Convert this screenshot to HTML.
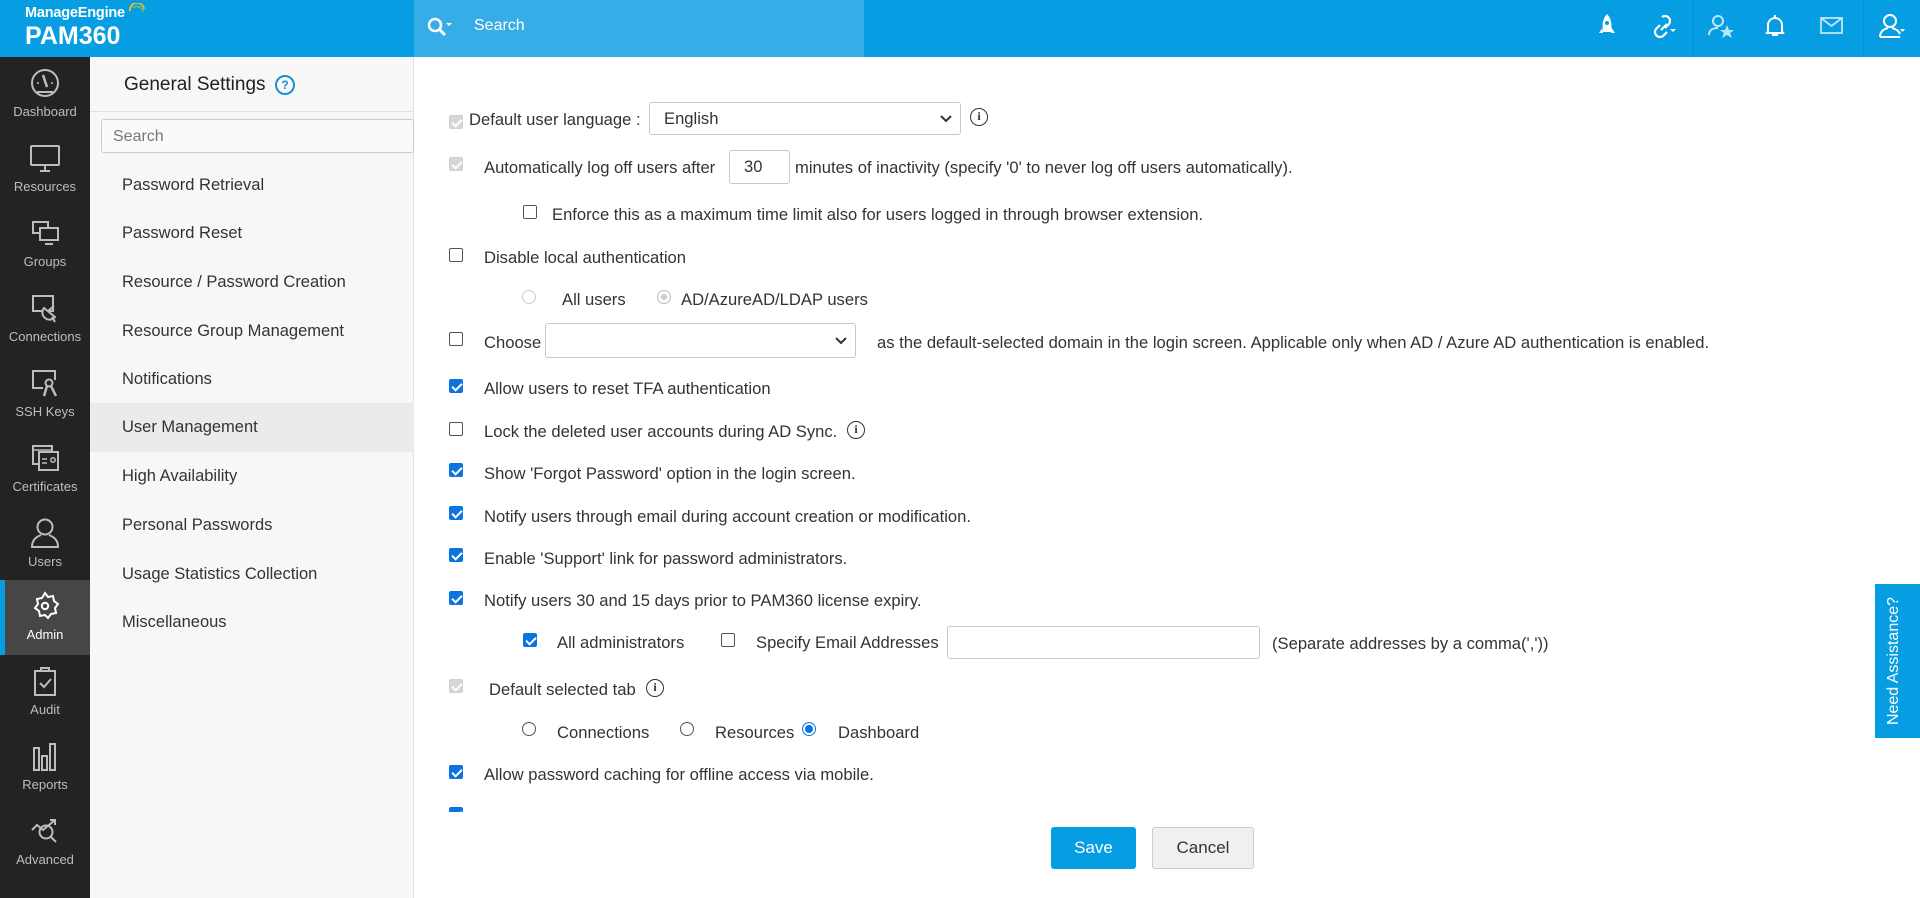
<!DOCTYPE html>
<html><head><meta charset="utf-8"><style>
*{box-sizing:border-box;margin:0;padding:0}
body{width:1920px;height:898px;overflow:hidden;font-family:"Liberation Sans",sans-serif;background:#fff;position:relative;color:#333}
.a{position:absolute}
#hdr{left:0;top:0;width:1920px;height:57px;background:#069de3}
#srch{left:414px;top:0;width:450px;height:57px;background:#36ade6;color:#fff;font-size:16px}
#side{left:0;top:57px;width:90px;height:841px;background:#232323}
.si{position:absolute;left:0;width:90px;height:75px;text-align:center;color:#bdbdbd;font-size:13px}
.si svg{position:absolute;left:29px;top:10px}
.si span{position:absolute;left:0;right:0;top:47px}
#panel{left:90px;top:57px;width:324px;height:841px;background:#f7f7f7;border-right:1px solid #e2e2e2}
.mi{position:absolute;left:0;width:324px;height:49px;line-height:49px;padding-left:32px;font-size:16.5px;color:#333}
.cb{position:absolute;width:14px;height:14px;border:1px solid #555;border-radius:2px;background:#fff}
.cb.on{background:#0a74e0;border-color:#0a74e0}
.cb.on::after,.cb.dis::after{content:"";position:absolute;left:4px;top:1px;width:4px;height:8px;border-style:solid;border-color:#fff;border-width:0 2px 2px 0;transform:rotate(45deg)}
.cb.dis{background:#d6d6d6;border-color:#d0d0d0}
.rd{position:absolute;width:14px;height:14px;border:1px solid #555;border-radius:50%;background:#fff}
.rd.dis{border-color:#ccc}
.rd.dis2{border-color:#bbb}
.rd.dis2::after{content:"";position:absolute;left:3px;top:3px;width:6px;height:6px;border-radius:50%;background:#ccc}
.rd.on{border-color:#0a74e0}
.rd.on::after{content:"";position:absolute;left:2px;top:2px;width:8px;height:8px;border-radius:50%;background:#0a74e0}
.t{position:absolute;font-size:16.6px;color:#333;white-space:nowrap;line-height:20px;margin-top:2px}
.inp{position:absolute;border:1px solid #c8c8c8;border-radius:3px;background:#fff;font-size:16.6px;color:#333;padding-left:14px}
.info{position:absolute;width:18px;height:18px;border:1.5px solid #333;border-radius:50%;font:bold 12px "Liberation Serif",serif;text-align:center;line-height:15px;color:#333}
</style></head><body>
<div id="hdr" class="a">
 <div class="a" style="left:25px;top:5px;color:#fff;font-size:14.5px;font-weight:bold;letter-spacing:-0.2px">ManageEngine</div>
 <svg class="a" style="left:128px;top:3px" width="18" height="16"><path d="M2 8 A7 7 0 0 1 16 6" stroke="#e8b339" stroke-width="2" fill="none"/><path d="M5 5 A6 6 0 0 1 15 9" stroke="#6fc25a" stroke-width="1.5" fill="none"/></svg>
 <div class="a" style="left:25px;top:22px;color:#fff;font-size:25px;font-weight:bold">PAM360</div>
 <div class="a" style="left:1693px;top:0;width:1px;height:57px;background:#0a8bd0"></div>
 <div class="a" style="left:1863px;top:0;width:1px;height:57px;background:#0a8bd0"></div>
 <svg class="a" style="left:1597px;top:13px" width="20" height="26"><path d="M10 1 C15 6 15 14 14 19 L6 19 C5 14 5 6 10 1Z M6 14 L2 20 L6 20 M14 14 L18 20 L14 20 M8 21 L12 21" fill="#fff"/><circle cx="10" cy="10" r="2" fill="#069de3"/></svg>
 <svg class="a" style="left:1650px;top:13px" width="30" height="28"><path d="M12 4 a5 5 0 0 1 7 7 l-4 4 M10 12 l-4 4 a5 5 0 0 0 7 7 l4-4 M11 17 l6-6" stroke="#fff" stroke-width="2.2" fill="none"/><path d="M20 16 l6 0 l-3 3z" fill="#fff"/></svg>
 <svg class="a" style="left:1708px;top:13px" width="28" height="28"><circle cx="10" cy="8" r="5" stroke="#bde6fa" stroke-width="2" fill="none"/><path d="M1 22 c0-5 4-7 9-7" stroke="#bde6fa" stroke-width="2" fill="none"/><path d="M19 12 l2 5 5 0 -4 3 2 5 -5-3 -5 3 2-5 -4-3 5 0z" fill="#bde6fa"/></svg>
 <svg class="a" style="left:1764px;top:14px" width="22" height="24"><path d="M4 18 L4 11 a7 7 0 0 1 14 0 L18 18 L20 19 L2 19 Z" stroke="#fff" stroke-width="2" fill="none"/><path d="M8 21 h6" stroke="#fff" stroke-width="2"/><path d="M11 1 v3" stroke="#fff" stroke-width="2"/></svg>
 <svg class="a" style="left:1820px;top:17px" width="24" height="18"><rect x="1" y="1" width="21" height="15" stroke="#bde6fa" stroke-width="1.8" fill="none"/><path d="M1 1 L11.5 9 L22 1" stroke="#bde6fa" stroke-width="1.8" fill="none"/></svg>
 <svg class="a" style="left:1879px;top:13px" width="28" height="28"><circle cx="11" cy="8" r="6" stroke="#fff" stroke-width="2" fill="none"/><path d="M1 24 c0-6 4-8 8-9 M13 15 c4 1 7 3 8 6 M1 24 h20" stroke="#fff" stroke-width="2" fill="none"/><path d="M21 16 l5 0 -2.5 3z" fill="#fff"/></svg>
</div>
<div id="srch" class="a">
 <svg class="a" style="left:12px;top:16px" width="30" height="24"><circle cx="9" cy="9" r="6" stroke="#fff" stroke-width="2.5" fill="none"/><path d="M13 13 l6 6" stroke="#fff" stroke-width="3"/><path d="M20 7 l6 0 -3 3z" fill="#fff"/></svg>
 <div class="a" style="left:60px;top:17px">Search</div>
</div>
<div id="side" class="a">
 <div class="si" style="top:0"><svg width="32" height="32"><circle cx="16" cy="16" r="13" stroke="#bdbdbd" stroke-width="2" fill="none"/><path d="M14 8 l4 12" stroke="#bdbdbd" stroke-width="2.5"/><circle cx="9" cy="16" r="1" fill="#bdbdbd"/><circle cx="23" cy="16" r="1" fill="#bdbdbd"/><path d="M8 25 h16" stroke="#bdbdbd" stroke-width="2"/></svg><span>Dashboard</span></div>
 <div class="si" style="top:75px"><svg width="32" height="32"><rect x="2" y="4" width="28" height="19" stroke="#bdbdbd" stroke-width="2" fill="none" rx="1"/><path d="M11 29 h10 M16 23 v6" stroke="#bdbdbd" stroke-width="2"/></svg><span>Resources</span></div>
 <div class="si" style="top:150px"><svg width="32" height="32"><rect x="4" y="5" width="15" height="11" stroke="#bdbdbd" stroke-width="2" fill="none"/><rect x="11" y="11" width="18" height="12" stroke="#bdbdbd" stroke-width="2" fill="#232323"/><path d="M16 27 h8" stroke="#bdbdbd" stroke-width="2"/></svg><span>Groups</span></div>
 <div class="si" style="top:225px"><svg width="32" height="32"><rect x="4" y="4" width="20" height="15" stroke="#bdbdbd" stroke-width="2" fill="none"/><path d="M15 16 a7 7 0 0 0 11 9z M19 19 l6-5" stroke="#bdbdbd" stroke-width="2" fill="#232323"/><path d="M23 25 l3 5" stroke="#bdbdbd" stroke-width="2"/></svg><span>Connections</span></div>
 <div class="si" style="top:300px"><svg width="32" height="32"><path d="M14 21 H4 V4 h22 v9" stroke="#bdbdbd" stroke-width="2" fill="none"/><circle cx="20" cy="16" r="3.5" stroke="#bdbdbd" stroke-width="2" fill="none"/><path d="M18 19 l-3 10 M22 19 l5 10" stroke="#bdbdbd" stroke-width="2.5"/></svg><span>SSH Keys</span></div>
 <div class="si" style="top:375px"><svg width="32" height="32"><rect x="4" y="4" width="19" height="18" stroke="#bdbdbd" stroke-width="2" fill="none"/><rect x="10" y="10" width="19" height="18" stroke="#bdbdbd" stroke-width="2" fill="#232323"/><path d="M4 8 h19 M13 17 h5 M13 21 h5" stroke="#bdbdbd" stroke-width="1.5"/><circle cx="24" cy="18" r="2.2" stroke="#bdbdbd" stroke-width="1.5" fill="none"/></svg><span>Certificates</span></div>
 <div class="si" style="top:450px"><svg width="32" height="32"><circle cx="16" cy="10" r="7.5" stroke="#bdbdbd" stroke-width="2" fill="none"/><path d="M12 18 c-5 2 -9 5 -9 12 h26 c0-7 -4-10 -9-12" stroke="#bdbdbd" stroke-width="2" fill="none"/></svg><span>Users</span></div>
 <div class="si" style="top:523px;height:75px;background:#464646;color:#fff"><div class="a" style="left:0;top:0;width:5px;height:75px;background:#069de3"></div><svg width="32" height="32"><path d="M16 2 l3 4 5-1 1 5 4 3 -3 4 1 5 -5 1 -3 4 -3-3 -5 1 -1-5 -4-3 3-4 -1-5 5-1z" stroke="#fff" stroke-width="2" fill="none" transform="translate(0,1)"/><circle cx="16" cy="16" r="3.2" stroke="#fff" stroke-width="2" fill="none"/></svg><span>Admin</span></div>
 <div class="si" style="top:598px"><svg width="32" height="32"><rect x="6" y="6" width="20" height="24" stroke="#bdbdbd" stroke-width="2" fill="none"/><path d="M12 6 v-3 h8 v3" stroke="#bdbdbd" stroke-width="2" fill="none"/><path d="M11 18 l4 4 7-8" stroke="#bdbdbd" stroke-width="2" fill="none"/></svg><span>Audit</span></div>
 <div class="si" style="top:673px"><svg width="32" height="32"><rect x="5" y="8" width="5" height="22" stroke="#bdbdbd" stroke-width="2" fill="none"/><rect x="13" y="16" width="5" height="14" stroke="#bdbdbd" stroke-width="2" fill="none"/><rect x="21" y="4" width="5" height="26" stroke="#bdbdbd" stroke-width="2" fill="none"/></svg><span>Reports</span></div>
 <div class="si" style="top:748px"><svg width="32" height="32"><circle cx="17" cy="17" r="6.5" stroke="#bdbdbd" stroke-width="2" fill="none"/><path d="M22 22 l5 5 M3 15 l5-5 6 5 12-10 M21 5 h5 v5" stroke="#bdbdbd" stroke-width="2" fill="none"/></svg><span>Advanced</span></div>
</div>
<div id="panel" class="a">
 <div class="a" style="left:34px;top:17px;font-size:19px;color:#222">General Settings</div>
 <div class="a" style="left:185px;top:18px;width:20px;height:20px;border:2px solid #1a8fd6;border-radius:50%;color:#1a8fd6;font-size:12px;font-weight:bold;text-align:center;line-height:16px">?</div>
 <div class="a" style="left:0;top:54px;width:324px;height:1px;background:#e0e0e0"></div>
 <div class="a" style="left:11px;top:62px;width:313px;height:34px;border:1px solid #ccc;border-radius:3px;background:#fafafa;font-size:16px;color:#777;padding:8px 0 0 11px">Search</div>
 <div class="mi" style="top:104px">Password Retrieval</div>
 <div class="mi" style="top:152px">Password Reset</div>
 <div class="mi" style="top:201px">Resource / Password Creation</div>
 <div class="mi" style="top:250px">Resource Group Management</div>
 <div class="mi" style="top:298px">Notifications</div>
 <div class="mi" style="top:346px;background:#ebebeb">User Management</div>
 <div class="mi" style="top:395px">High Availability</div>
 <div class="mi" style="top:444px">Personal Passwords</div>
 <div class="mi" style="top:493px">Usage Statistics Collection</div>
 <div class="mi" style="top:541px">Miscellaneous</div>
</div>

<div class="cb dis" style="left:449px;top:115px"></div>
<div class="t" style="left:469px;top:108px">Default user language :</div>
<div class="inp" style="left:649px;top:102px;width:312px;height:33px;line-height:31px">English<svg class="a" style="right:8px;top:12px" width="12" height="8"><path d="M1 1 l5 5 5-5" stroke="#333" stroke-width="2" fill="none"/></svg></div>
<div class="info" style="left:970px;top:108px">i</div>

<div class="cb dis" style="left:449px;top:157px"></div>
<div class="t" style="left:484px;top:156px">Automatically log off users after</div>
<div class="inp" style="left:729px;top:150px;width:61px;height:34px;line-height:32px">30</div>
<div class="t" style="left:795px;top:156px">minutes of inactivity (specify '0' to never log off users automatically).</div>

<div class="cb" style="left:523px;top:205px"></div>
<div class="t" style="left:552px;top:203px">Enforce this as a maximum time limit also for users logged in through browser extension.</div>

<div class="cb" style="left:449px;top:248px"></div>
<div class="t" style="left:484px;top:246px">Disable local authentication</div>

<div class="rd dis" style="left:522px;top:290px"></div>
<div class="t" style="left:562px;top:288px">All users</div>
<div class="rd dis2" style="left:657px;top:290px"></div>
<div class="t" style="left:681px;top:288px">AD/AzureAD/LDAP users</div>

<div class="cb" style="left:449px;top:332px"></div>
<div class="t" style="left:484px;top:331px">Choose</div>
<div class="inp" style="left:545px;top:323px;width:311px;height:35px"><svg class="a" style="right:8px;top:13px" width="12" height="8"><path d="M1 1 l5 5 5-5" stroke="#333" stroke-width="2" fill="none"/></svg></div>
<div class="t" style="left:877px;top:331px">as the default-selected domain in the login screen. Applicable only when AD / Azure AD authentication is enabled.</div>

<div class="cb on" style="left:449px;top:379px"></div>
<div class="t" style="left:484px;top:377px">Allow users to reset TFA authentication</div>

<div class="cb" style="left:449px;top:422px"></div>
<div class="t" style="left:484px;top:420px">Lock the deleted user accounts during AD Sync.</div>
<div class="info" style="left:847px;top:421px">i</div>

<div class="cb on" style="left:449px;top:463px"></div>
<div class="t" style="left:484px;top:462px">Show 'Forgot Password' option in the login screen.</div>

<div class="cb on" style="left:449px;top:506px"></div>
<div class="t" style="left:484px;top:505px">Notify users through email during account creation or modification.</div>

<div class="cb on" style="left:449px;top:548px"></div>
<div class="t" style="left:484px;top:547px">Enable 'Support' link for password administrators.</div>

<div class="cb on" style="left:449px;top:591px"></div>
<div class="t" style="left:484px;top:589px">Notify users 30 and 15 days prior to PAM360 license expiry.</div>

<div class="cb on" style="left:523px;top:633px"></div>
<div class="t" style="left:557px;top:631px">All administrators</div>
<div class="cb" style="left:721px;top:633px"></div>
<div class="t" style="left:756px;top:631px">Specify Email Addresses</div>
<div class="inp" style="left:947px;top:626px;width:313px;height:33px"></div>
<div class="t" style="left:1272px;top:632px">(Separate addresses by a comma(','))</div>

<div class="cb dis" style="left:449px;top:679px"></div>
<div class="t" style="left:489px;top:678px">Default selected tab</div>
<div class="info" style="left:646px;top:679px">i</div>

<div class="rd" style="left:522px;top:722px"></div>
<div class="t" style="left:557px;top:721px">Connections</div>
<div class="rd" style="left:680px;top:722px"></div>
<div class="t" style="left:715px;top:721px">Resources</div>
<div class="rd on" style="left:802px;top:722px"></div>
<div class="t" style="left:838px;top:721px">Dashboard</div>

<div class="cb on" style="left:449px;top:765px"></div>
<div class="t" style="left:484px;top:763px">Allow password caching for offline access via mobile.</div>

<div class="a" style="left:420px;top:805px;width:1440px;height:10px;overflow:hidden"><div class="cb on" style="left:29px;top:2px"></div></div>
<div class="a" style="left:414px;top:812px;width:1460px;height:86px;background:#fff"></div>

<div class="a" style="left:1051px;top:827px;width:85px;height:42px;background:#069de3;border-radius:3px;color:#fff;font-size:17px;text-align:center;line-height:42px">Save</div>
<div class="a" style="left:1152px;top:827px;width:102px;height:42px;background:#f0f0f0;border:1px solid #ccc;border-radius:3px;color:#333;font-size:17px;text-align:center;line-height:40px">Cancel</div>

<div class="a" style="left:1875px;top:584px;width:45px;height:154px;background:#069de3"><div class="a" style="left:-55px;top:65px;width:154px;height:24px;color:#fff;font-size:16px;text-align:center;transform:rotate(-90deg);white-space:nowrap">Need Assistance?</div></div>
</body></html>
